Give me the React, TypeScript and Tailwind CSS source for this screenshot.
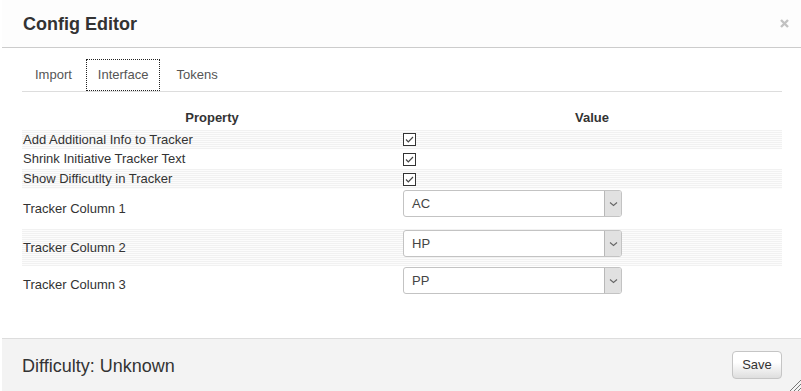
import React from 'react';

const stripe =
  'bg-[image:repeating-linear-gradient(180deg,#f1f1f1_0px,#f1f1f1_1px,#fcfcfc_1px,#fcfcfc_2px)]';

const Checkbox: React.FC = () => (
  <span className="flex h-[13px] w-[13px] items-center justify-center border border-[#333] bg-white">
    <svg width="11" height="11" viewBox="0 0 11 11" fill="none">
      <path d="M2 5.5 L4.3 7.8 L9 3" stroke="#444" strokeWidth="1.2" />
    </svg>
  </span>
);

const Select: React.FC<{ value: string }> = ({ value }) => (
  <div className="flex h-[27px] w-[219px] overflow-hidden rounded-[3px] border border-[#c3c3c3] bg-white">
    <div className="flex flex-1 items-center pl-[8px] text-[13px] text-[#444]">{value}</div>
    <div className="flex w-[17px] items-center justify-center border-l border-[#b8b8b8] bg-[#e1e1e1]">
      <svg width="9" height="6" viewBox="0 0 9 6" fill="none">
        <path d="M1 1.5 L4.5 4.5 L8 1.5" stroke="#666" strokeWidth="1.1" />
      </svg>
    </div>
  </div>
);

const App: React.FC = () => {
  const checks = [
    { label: 'Add Additional Info to Tracker', striped: true, h: 'h-[19px]' },
    { label: 'Shrink Initiative Tracker Text', striped: false, h: 'h-[20px]' },
    { label: 'Show Difficutlty in Tracker', striped: true, h: 'h-[20px]' },
  ];
  const selects = [
    { label: 'Tracker Column 1', value: 'AC', striped: false, h: 'h-[40px]' },
    { label: 'Tracker Column 2', value: 'HP', striped: true, h: 'h-[37px]' },
    { label: 'Tracker Column 3', value: 'PP', striped: false, h: 'h-[38px]' },
  ];

  return (
    <div className="relative flex h-[391px] w-[801px] flex-col overflow-hidden bg-white font-['Liberation_Sans',Arial,sans-serif] text-[#333]">
      {/* header */}
      <div className="ml-[2px] flex h-[48px] items-center justify-between border-b border-[#cccccc] bg-[#fdfdfd] pl-[21px] pr-[12px]">
        <h2 className="text-[18px] font-bold leading-none">Config Editor</h2>
        <svg width="9" height="9" viewBox="0 0 9 9">
          <path d="M1 1 L8 8 M8 1 L1 8" stroke="#c2c2c2" strokeWidth="2.4" />
        </svg>
      </div>

      {/* body */}
      <div className="ml-[2px] flex-1 pl-[20px] pr-[19px] pt-[11px]">
        <div className="flex h-[33px] border-b border-[#dddddd] text-[13px] text-[#555]">
          <div className="ml-[1px] flex h-[32px] items-center px-[12px]">Import</div>
          <div className="ml-[2px] flex h-[32px] items-center border border-dotted border-[#222] px-[11px]">
            Interface
          </div>
          <div className="ml-[3px] flex h-[32px] items-center px-[13px]">Tokens</div>
        </div>

        <div className="mt-[16px] text-[13px]">
          <div className="flex h-[22px] font-bold leading-[20px]">
            <div className="w-[380px] text-center">Property</div>
            <div className="flex-1 text-center">Value</div>
          </div>

          {checks.map((c) => (
            <div key={c.label} className={`flex ${c.h} items-center ${c.striped ? stripe : ''}`}>
              <div className="w-[380px] pl-[1px]">{c.label}</div>
              <div className="pl-[1px]">
                <Checkbox />
              </div>
            </div>
          ))}

          {selects.map((s) => (
            <div key={s.label} className={`flex ${s.h} ${s.striped ? stripe : ''}`}>
              <div className="flex w-[380px] items-center pl-[1px]">{s.label}</div>
              <div className="pl-[1px] pt-[1px]">
                <Select value={s.value} />
              </div>
            </div>
          ))}
        </div>
      </div>

      {/* footer */}
      <div className="ml-[2px] flex h-[53px] items-center justify-between border-t border-[#dddddd] bg-[#f3f3f3] pl-[20px] pr-[19px]">
        <span className="pt-[2px] text-[18px]">Difficulty: Unknown</span>
        <button className="h-[28px] w-[50px] rounded-[4px] border border-[#c5c5c5] bg-gradient-to-b from-white from-40% to-[#dedede] text-[13px] text-[#333]">
          Save
        </button>
      </div>

      <svg className="absolute bottom-0 right-0" width="12" height="12" viewBox="0 0 12 12">
        <path d="M12 1 L1 12 M12 5 L5 12 M12 9 L9 12" stroke="#777" strokeWidth="1" />
      </svg>
    </div>
  );
};

export default App;
